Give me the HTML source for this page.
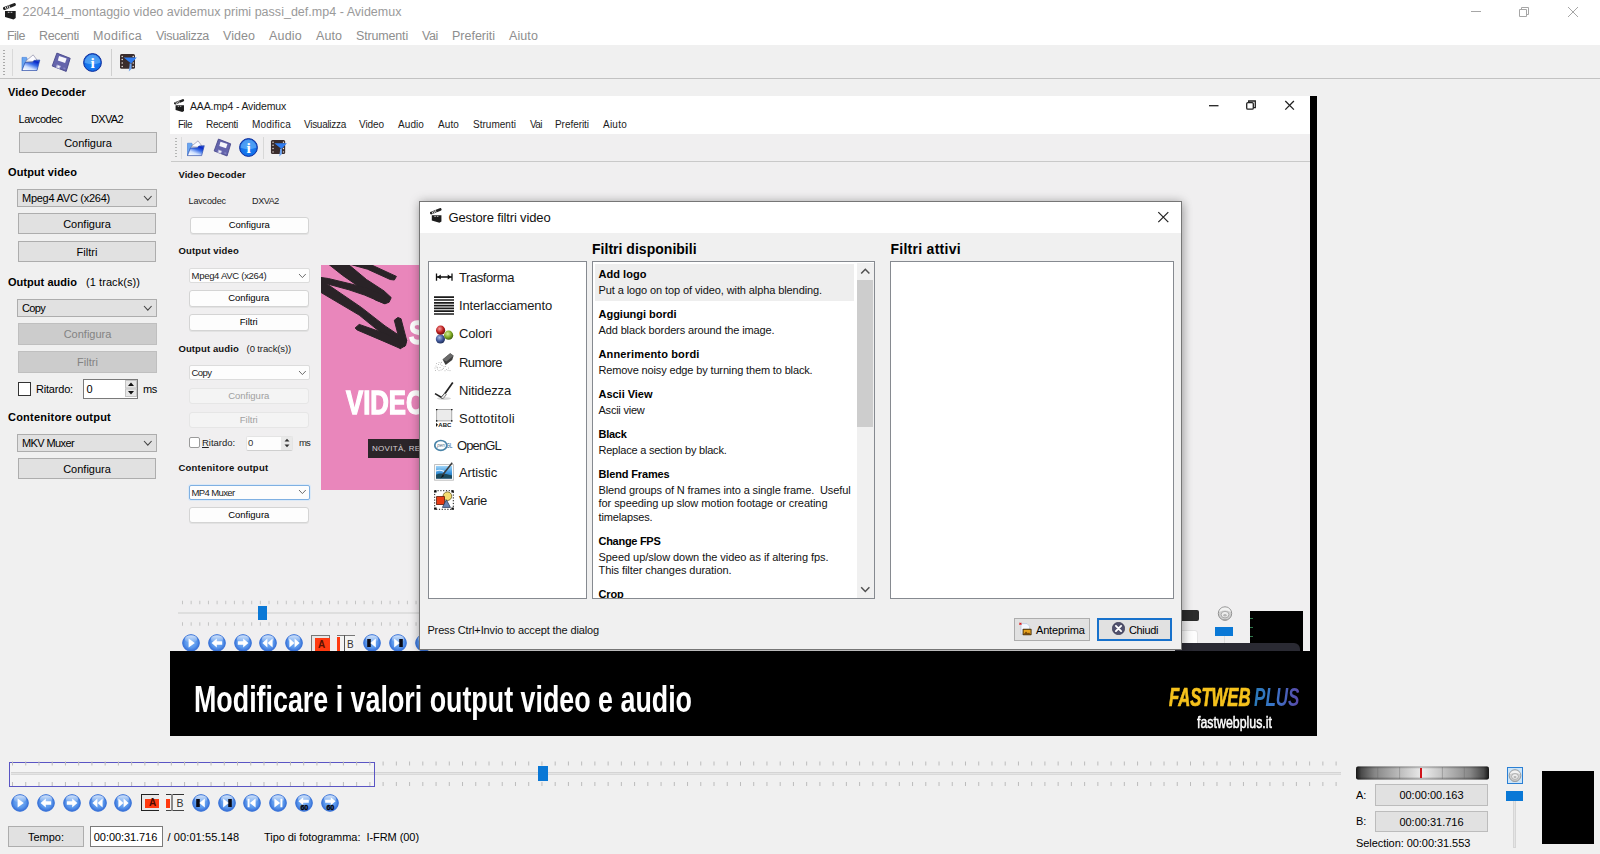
<!DOCTYPE html>
<html><head><meta charset="utf-8"><title>Avidemux</title>
<style>
*{box-sizing:border-box;margin:0;padding:0}
html,body{width:1600px;height:854px;overflow:hidden;background:#f0f0f0;font-family:"Liberation Sans",sans-serif;font-size:11px;color:#000}
.a{position:absolute}
.t{position:absolute;white-space:pre;line-height:1;transform-origin:0 50%}
.b{font-weight:bold}
.btn{position:absolute;background:#e1e1e1;border:1px solid #adadad;text-align:center;font-size:11px}
.btn span{position:absolute;left:0;right:0;top:50%;transform:translateY(-50%);line-height:1}
.btn.dis{background:#cccccc;border-color:#bfbfbf;color:#838383}
.combo{position:absolute;background:#e1e1e1;border:1px solid #adadad}
.ibtn{position:absolute;background:#fdfdfd;border:1px solid #d4d4d4;border-radius:3px;text-align:center;font-size:9.5px;box-shadow:0 1px 0 #e2e2e2}
.ibtn span{position:absolute;left:0;right:0;top:50%;transform:translateY(-50%);line-height:1}
.ibtn.dis{background:#f4f4f4;border-color:#e6e6e6;color:#a0a0a0;box-shadow:none}
.icombo{position:absolute;background:#fdfdfd;border:1px solid #dcdcdc;border-radius:2px}
.lst{position:absolute;background:#fff;border:1px solid #868a90}
</style></head><body>
<svg width="0" height="0" style="position:absolute">
<defs>
<radialGradient id="gb" cx="0.5" cy="0.45" r="0.6"><stop offset="0" stop-color="#86b6f6"/><stop offset="0.55" stop-color="#5a98ec"/><stop offset="0.85" stop-color="#3a72d8"/><stop offset="1" stop-color="#9abcf0"/></radialGradient>
<linearGradient id="gsh" x1="0" y1="0" x2="0" y2="1"><stop offset="0" stop-color="#fff" stop-opacity=".75"/><stop offset="1" stop-color="#fff" stop-opacity="0"/></linearGradient>
<linearGradient id="gjog" x1="0" x2="1"><stop offset="0" stop-color="#161616"/><stop offset="0.04" stop-color="#4a4a4a"/><stop offset="0.14" stop-color="#868686"/><stop offset="0.33" stop-color="#bdbdbd"/><stop offset="0.5" stop-color="#ececec"/><stop offset="0.67" stop-color="#bdbdbd"/><stop offset="0.86" stop-color="#868686"/><stop offset="0.96" stop-color="#4a4a4a"/><stop offset="1" stop-color="#161616"/></linearGradient><linearGradient id="gjogv" x1="0" y1="0" x2="0" y2="1"><stop offset="0" stop-color="#000" stop-opacity=".35"/><stop offset="0.18" stop-color="#000" stop-opacity="0"/><stop offset="0.8" stop-color="#000" stop-opacity="0"/><stop offset="1" stop-color="#000" stop-opacity=".4"/></linearGradient>
<linearGradient id="gfold" x1="0.15" y1="1" x2="0.85" y2="0"><stop offset="0" stop-color="#ffffff"/><stop offset="0.3" stop-color="#cfe0ff"/><stop offset="0.6" stop-color="#3a6ee8"/><stop offset="0.85" stop-color="#0a28c8"/><stop offset="1" stop-color="#2a50d8"/></linearGradient>
<radialGradient id="ginfo" cx="0.5" cy="0.55" r="0.6"><stop offset="0" stop-color="#1a86f8"/><stop offset="0.7" stop-color="#126ee8"/><stop offset="1" stop-color="#0a44c0"/></radialGradient>
<radialGradient id="gred" cx="0.4" cy="0.35" r="0.7"><stop offset="0" stop-color="#f4a0a0"/><stop offset="0.55" stop-color="#c02020"/><stop offset="1" stop-color="#5a0a0a"/></radialGradient>
<radialGradient id="ggrn" cx="0.4" cy="0.35" r="0.7"><stop offset="0" stop-color="#d4ee9a"/><stop offset="0.55" stop-color="#80aa24"/><stop offset="1" stop-color="#34540c"/></radialGradient>
<radialGradient id="gblu" cx="0.4" cy="0.35" r="0.7"><stop offset="0" stop-color="#a8bce4"/><stop offset="0.55" stop-color="#40589a"/><stop offset="1" stop-color="#18264c"/></radialGradient>
<linearGradient id="gart" x1="0" y1="0" x2="0" y2="1"><stop offset="0" stop-color="#9fd4f8"/><stop offset="0.55" stop-color="#3a94dc"/><stop offset="1" stop-color="#1c5890"/></linearGradient>

<symbol id="clap" viewBox="0 0 14 17"><path d="M2 8h10.700v7.100l-2.200 1.400L2 13.900z" fill="#1c1c1c"/><path d="M1.500 5.500L11.300 1.600" stroke="#222" stroke-width="3.100" stroke-linecap="round"/><path d="M2.300 3.900l1 2.500M4.100 3.200l1 2.500M5.900 2.500l1 2.500" stroke="#fff" stroke-width=".9"/><path d="M4.800 9.300h1.700M7.600 9.300h1.700" stroke="#e4e4e4" stroke-width=".9"/></symbol>

<symbol id="cb" viewBox="0 0 18 18"><circle cx="9" cy="9" r="8.5" fill="url(#gb)"/><circle cx="9" cy="9" r="8.3" fill="none" stroke="#3a74d8" stroke-width="0.9"/><ellipse cx="9" cy="5" rx="6.2" ry="3.8" fill="url(#gsh)"/></symbol>
<symbol id="b_play" viewBox="0 0 18 18"><use href="#cb"/><path d="M6.6 4.4l6.2 4.6-6.2 4.6z" fill="#fff"/></symbol>
<symbol id="b_back" viewBox="0 0 18 18"><use href="#cb"/><path d="M3.6 9l5.2-4.6v2.9h5.4v3.4H8.8v2.9z" fill="#fff"/></symbol>
<symbol id="b_fwd" viewBox="0 0 18 18"><use href="#cb"/><path d="M14.4 9L9.2 4.4v2.9H3.8v3.4h5.4v2.9z" fill="#fff"/></symbol>
<symbol id="b_rew" viewBox="0 0 18 18"><use href="#cb"/><path d="M3.4 9l5-4.4v8.8zM8.6 9l5-4.4v8.8z" fill="#fff"/></symbol>
<symbol id="b_ff" viewBox="0 0 18 18"><use href="#cb"/><path d="M14.6 9l-5-4.4v8.8zM9.4 9l-5-4.4v8.8z" fill="#fff"/></symbol>
<symbol id="b_pk" viewBox="0 0 18 18"><use href="#cb"/><path d="M4.2 5h3.6v8H4.2z" fill="#0a0a14"/><path d="M7.4 9l5.4-4.4v8.8z" fill="#fff"/></symbol>
<symbol id="b_nk" viewBox="0 0 18 18"><use href="#cb"/><path d="M10.2 5h3.6v8h-3.6z" fill="#0a0a14"/><path d="M10.6 9L5.2 4.6v8.8z" fill="#fff"/></symbol>
<symbol id="b_pb" viewBox="0 0 18 18"><use href="#cb"/><path d="M4.6 4.8h2v8.4h-2zM6.8 9l5.8-4.4v8.8z" fill="#fff"/></symbol>
<symbol id="b_nb" viewBox="0 0 18 18"><use href="#cb"/><path d="M11.4 4.8h2v8.4h-2zM11.2 9L5.4 4.6v8.8z" fill="#fff"/></symbol>
<symbol id="b_p60" viewBox="0 0 18 18"><use href="#cb"/><path d="M3.400 7.200l4.800-4v2.500h5.600v3H8.200v2.500z" fill="#fff"/><text x="9.300" y="16.300" font-family="'Liberation Sans',sans-serif" font-weight="bold" font-size="7" text-anchor="middle" fill="#05050c" stroke="#05050c" stroke-width=".4">60</text></symbol>
<symbol id="b_n60" viewBox="0 0 18 18"><use href="#cb"/><path d="M14.600 7.200l-4.800-4v2.500H4.200v3h5.600v2.500z" fill="#fff"/><text x="9.300" y="16.300" font-family="'Liberation Sans',sans-serif" font-weight="bold" font-size="7" text-anchor="middle" fill="#05050c" stroke="#05050c" stroke-width=".4">60</text></symbol>

<symbol id="folder" viewBox="0 0 20 18"><path d="M1 3.400h4.500l.7 1.500L4 9l-3 7.500z" fill="#6aa6f0" stroke="#3a78d8" stroke-width=".6"/><path d="M4.700 7.100L12.200.9 16 6l-4.100 1.500z" fill="#fbfbff" stroke="#7c7c9c" stroke-width=".6"/><path d="M4 8.600l7.500-.4L13 6.400l5.800-.4L16 16.500H1z" fill="url(#gfold)" stroke="#2a4aa8" stroke-width=".7" stroke-linejoin="round"/></symbol>
<symbol id="floppy" viewBox="0 0 20 21"><path d="M5.900 1.100L19.200 6.300 15.200 19.400 1.200 14z" fill="#6464ac" stroke="#48488a" stroke-width=".9" stroke-linejoin="round"/><path d="M8.100 4.100l7.500 2.400-1.500 4.500-7.300-2.400z" fill="#f6f6fc"/><path d="M5.900 12.500l4.100 1.500-1.500 3-3.800-1.500z" fill="#b4b4dc"/><path d="M7 13.600l1.800.7-.8 1.700-1.800-.7z" fill="#f4f4fa"/><path d="M12.600 15.200l2 .8-.5 1.600-2-.8z" fill="#8484c0"/></symbol>
<symbol id="info" viewBox="0 0 19 19"><circle cx="9.500" cy="9.500" r="8.900" fill="url(#ginfo)" stroke="#0c2c9c" stroke-width="1"/><path d="M1.600 9.500a7.900 7.900 0 0 1 15.800 0c-4 2-11.800 2-15.800 0z" fill="#8fd0ff" opacity=".45"/><text x="9.700" y="15" font-family="'Liberation Serif',serif" font-weight="bold" font-size="15.500" text-anchor="middle" fill="#fff">i</text></symbol>
<symbol id="filt" viewBox="0 0 19 19"><rect x="1" y="1" width="15" height="14.800" rx="1.600" fill="#3a2c2c"/><path d="M3.200 3.400h.01M3.200 6.600h.01M3.200 10h.01M3.200 13.600h.01M14.200 3.400h.01M14.200 10h.01M14.200 13.600h.01" stroke="#f0e8e4" stroke-width="1.500" stroke-linecap="round"/><path d="M4.600 4.600h13.200l-5.600 6z" fill="#2f7cf0"/><path d="M10.600 10.400h2v5.400l-2.800 2.800.8-6.400z" fill="#6ea4f0"/></symbol>

<symbol id="i_tr" viewBox="0 0 20 20"><path d="M2.500 6.400v7.400M18 6.400v7.400M3 10h14.500" stroke="#111" stroke-width="1.300" fill="none"/><path d="M3.200 10l3.600-2.600v5.200zM17.300 10l-3.600-2.600v5.200z" fill="#111"/></symbol>
<symbol id="i_il" viewBox="0 0 20 20"><path d="M0 1.200h20M0 4h20M0 6.800h20M0 9.600h20M0 12.400h20M0 15.200h20M0 18h20" stroke="#1a1a1a" stroke-width="1.700"/></symbol>
<symbol id="i_co" viewBox="0 0 20 20"><circle cx="6.400" cy="15" r="4.600" fill="url(#gblu)"/><circle cx="14.600" cy="11.200" r="4.600" fill="url(#ggrn)"/><circle cx="6.600" cy="6.200" r="4.600" fill="url(#gred)"/></symbol>
<symbol id="i_ru" viewBox="0 0 20 20"><path d="M8.600 7.400l7.600-6.200 3.400 2.600-1.400 4.200-6.600 5z" fill="#3c3c3c"/><path d="M8.600 7.400l7.600-6.200 3.400 2.600-7.200 5.800z" fill="#6a6a6a"/><path d="M2 14h.01M4.500 12.500h.01M6 15.500h.01M3.500 17h.01M8 13.500h.01M9.500 16.500h.01M7 18h.01M1.500 18.500h.01M11.500 14.500h.01M12.500 17.500h.01M5 10.500h.01M10 14.800h.01M14.500 16h.01M2.500 11.500h.01M5 18.600h.01M11 18.800h.01M14 18.200h.01M6.600 12h.01M3.200 15.400h.01M8.400 17.200h.01M16 18.600h.01M1 16h.01M7.400 10.400h.01" stroke="#b4b4b4" stroke-width="1.100" stroke-linecap="round"/></symbol>
<symbol id="i_ni" viewBox="0 0 20 20"><ellipse cx="10" cy="17.600" rx="7" ry="1.400" fill="#d8d8d8"/><path d="M18.800 1.600L9.600 14.400" stroke="#222" stroke-width="1.700"/><path d="M1 12.600l6.600 3.800 3-3" stroke="#222" stroke-width="1.600" fill="none"/><path d="M7 16.600l3.800-4.400 1.600 1.300-3.400 4.300z" fill="#eee" stroke="#555" stroke-width=".7"/></symbol>
<symbol id="i_so" viewBox="0 0 20 20"><rect x="2.700" y=".600" width="15.100" height="11.300" fill="#ebebeb" stroke="#8c8c8c" stroke-width=".7"/><path d="M2.700.6h.01M17.800.6h.01M2.700 11.900h.01M17.800 11.900h.01" stroke="#111" stroke-width="1.600" stroke-linecap="round"/><path d="M2 13.700l2 2.100-2 2.100z" fill="#111"/><text x="4.300" y="18" font-family="'Liberation Sans',sans-serif" font-weight="bold" font-size="6" fill="#111" textLength="13" lengthAdjust="spacingAndGlyphs">ABC</text></symbol>
<symbol id="i_gl" viewBox="0 0 20 20"><ellipse cx="6.800" cy="9.400" rx="6" ry="4.900" fill="#fff" stroke="#4a84a8" stroke-width="1.700"/><text x="3.200" y="11.400" font-family="'Liberation Sans',sans-serif" font-style="italic" font-size="5.500" fill="#4a6a80" textLength="7.600" lengthAdjust="spacingAndGlyphs">pen</text><text x="12.400" y="12.200" font-family="'Liberation Sans',sans-serif" font-weight="bold" font-size="6.500" fill="#5a8ab0" textLength="6" lengthAdjust="spacingAndGlyphs">GL</text></symbol>
<symbol id="i_ar" viewBox="0 0 20 20"><rect x=".6" y="2.600" width="18.800" height="15.600" fill="#fbfbfb" stroke="#b4b4b4" stroke-width=".8"/><rect x="2" y="4" width="16" height="12.600" fill="url(#gart)"/><path d="M2 12.800c4-2.200 8-1.600 16 .6v3.200H2z" fill="#1c4a5c"/><path d="M2 9c3-1.400 5-1 8 .4" stroke="#e8f4ff" stroke-width="1.200" fill="none"/><path d="M18.200.8L8.600 13" stroke="#3c3c3c" stroke-width="1.500"/><path d="M9 12.400l-2.800 4.200 3.800-2.600z" fill="#111"/></symbol>
<symbol id="i_va" viewBox="0 0 20 20"><rect x=".7" y=".7" width="18.600" height="18.600" fill="none" stroke="#111" stroke-width="1" stroke-dasharray="1.200 1.600"/><path d="M.2.200h2.400v2.400H.2zM17.400.2h2.400v2.400h-2.400zM.2 17.400h2.400v2.400H.2zM17.400 17.400h2.400v2.400h-2.400z" fill="#111"/><circle cx="13.400" cy="6.200" r="4.300" fill="#f4dc70" stroke="#6a5a20" stroke-width=".8"/><rect x="2.600" y="6.600" width="7.800" height="8" fill="#e83c14" stroke="#5a1808" stroke-width=".8"/><path d="M8.400 17.400l4-7.600 4 7.600z" fill="#6a84b4" stroke="#2c3c5c" stroke-width=".8"/></symbol>
<symbol id="i_prev" viewBox="0 0 15 15"><path d="M3 1.600h6l2.600 2.600v8H3z" fill="#f4f8ff" stroke="#b4c4dc" stroke-width=".7"/><path d="M1.400.8l2 1.800M3.400.8l-2 1.800" stroke="#e01818" stroke-width="1.100"/><rect x="4.600" y="6.800" width="9" height="6.400" rx=".8" fill="#4a3410"/><rect x="5.600" y="7.800" width="7" height="4.400" fill="#e8a420"/><path d="M5.600 12.200l2.400-2.600 1.800 1.600 1.200-.8 1.600 1.800z" fill="#7a4a08"/></symbol>
<symbol id="i_close" viewBox="0 0 13 13"><circle cx="6.500" cy="6.500" r="6.200" fill="#50506c" stroke="#34344c" stroke-width=".6"/><path d="M3.900 3.900l5.200 5.200M9.100 3.900L3.900 9.100" stroke="#fff" stroke-width="1.900" stroke-linecap="round"/></symbol>
</defs></svg>

<div class="a" style="left:0px;top:0px;width:1600px;height:45px;background:#fff"></div>
<svg class="a" style="left:3px;top:3.2px;" width="14" height="17"><use href="#clap" width="14" height="17"/></svg>
<div class="t" style="letter-spacing:0.020px;left:22.5px;top:6.4px;font-size:12.5px;height:12.5px;color:#9a9a9a;">220414_montaggio video avidemux primi passi_def.mp4 - Avidemux</div>
<svg class="a" style="left:1460px;top:0" width="140" height="24" viewBox="0 0 140 24" fill="none" stroke="#a6a6a6" stroke-width="1"><path d="M11 11.5h10"/><path d="M59.5 9.5h7v7h-7z"/><path d="M61.5 9.5v-2h7v7h-2"/><path d="M108 7l10 10M118 7l-10 10"/></svg>
<div class="t" style="letter-spacing:-0.539px;left:7px;top:29.6px;font-size:12.5px;height:12.5px;color:#8e8e8e;">File</div>
<div class="t" style="letter-spacing:-0.342px;left:39px;top:29.6px;font-size:12.5px;height:12.5px;color:#8e8e8e;">Recenti</div>
<div class="t" style="letter-spacing:0.307px;left:93px;top:29.6px;font-size:12.5px;height:12.5px;color:#8e8e8e;">Modifica</div>
<div class="t" style="letter-spacing:-0.306px;left:156px;top:29.6px;font-size:12.5px;height:12.5px;color:#8e8e8e;">Visualizza</div>
<div class="t" style="letter-spacing:0.050px;left:223px;top:29.6px;font-size:12.5px;height:12.5px;color:#8e8e8e;">Video</div>
<div class="t" style="letter-spacing:0.203px;left:269px;top:29.6px;font-size:12.5px;height:12.5px;color:#8e8e8e;">Audio</div>
<div class="t" style="letter-spacing:0.070px;left:316px;top:29.6px;font-size:12.5px;height:12.5px;color:#8e8e8e;">Auto</div>
<div class="t" style="letter-spacing:-0.167px;left:356px;top:29.6px;font-size:12.5px;height:12.5px;color:#8e8e8e;">Strumenti</div>
<div class="t" style="letter-spacing:-0.380px;left:422px;top:29.6px;font-size:12.5px;height:12.5px;color:#8e8e8e;">Vai</div>
<div class="t" style="letter-spacing:-0.009px;left:452px;top:29.6px;font-size:12.5px;height:12.5px;color:#8e8e8e;">Preferiti</div>
<div class="t" style="letter-spacing:0.100px;left:509px;top:29.6px;font-size:12.5px;height:12.5px;color:#8e8e8e;">Aiuto</div>
<div class="a" style="left:0px;top:78px;width:1600px;height:1px;background:#c2c2c2"></div>
<div class="a" style="left:3px;top:49px;width:2px;height:26px;background:repeating-linear-gradient(#f0f0f0 0 1px,#a9a9a9 1px 2px,#f0f0f0 2px 3px)"></div>
<div class="a" style="left:12px;top:49px;width:1px;height:27px;background:#d9d9d9"></div>
<div class="a" style="left:111px;top:49px;width:1px;height:27px;background:#d0d0d0"></div>
<svg class="a" style="left:21px;top:54px;" width="20" height="18"><use href="#folder" width="20" height="18"/></svg>
<svg class="a" style="left:51px;top:52px;" width="20" height="21"><use href="#floppy" width="20" height="21"/></svg>
<svg class="a" style="left:83px;top:53px;" width="19" height="19"><use href="#info" width="19" height="19"/></svg>
<svg class="a" style="left:119px;top:53px;" width="19" height="19"><use href="#filt" width="19" height="19"/></svg>
<div class="t" style="letter-spacing:0.090px;left:8px;top:87.0px;font-size:11px;height:11px;font-weight:bold;">Video Decoder</div>
<div class="t" style="letter-spacing:-0.449px;left:18.5px;top:113.5px;font-size:11px;height:11px;">Lavcodec</div>
<div class="t" style="letter-spacing:-0.653px;left:91px;top:113.5px;font-size:11px;height:11px;">DXVA2</div>
<div class="btn" style="left:19px;top:132px;width:138px;height:21px;"><span>Configura</span></div>
<div class="t" style="letter-spacing:0.098px;left:8px;top:166.5px;font-size:11px;height:11px;font-weight:bold;">Output video</div>
<div class="combo" style="left:17px;top:189px;width:140px;height:18px;"></div>
<div class="t" style="letter-spacing:-0.258px;left:22px;top:193.0px;font-size:11px;height:11px;">Mpeg4 AVC (x264)</div>
<svg class="a" style="left:143.2px;top:195.2px" width="9.6" height="6.6" viewBox="-1 -1 9.6 6.6"><path d="M0 0L3.8 4.1L7.6 0" fill="none" stroke="#444" stroke-width="1.1"/></svg>
<div class="btn" style="left:18px;top:213px;width:138px;height:21px;"><span>Configura</span></div>
<div class="btn" style="left:18px;top:241px;width:138px;height:21px;"><span>Filtri</span></div>
<div class="t" style="letter-spacing:0.047px;left:8px;top:276.5px;font-size:11px;height:11px;font-weight:bold;">Output audio</div>
<div class="t" style="letter-spacing:0.069px;left:86px;top:276.5px;font-size:11px;height:11px;">(1 track(s))</div>
<div class="combo" style="left:17px;top:299px;width:140px;height:18px;"></div>
<div class="t" style="letter-spacing:-0.672px;left:22px;top:303.0px;font-size:11px;height:11px;">Copy</div>
<svg class="a" style="left:143.2px;top:305.2px" width="9.6" height="6.6" viewBox="-1 -1 9.6 6.6"><path d="M0 0L3.8 4.1L7.6 0" fill="none" stroke="#444" stroke-width="1.1"/></svg>
<div class="btn dis" style="left:18px;top:323px;width:139px;height:22px;"><span>Configura</span></div>
<div class="btn dis" style="left:18px;top:351px;width:139px;height:22px;"><span>Filtri</span></div>
<div class="a" style="left:17.5px;top:382px;width:13.5px;height:13.5px;background:#fff;border:1px solid #333"></div>
<div class="t" style="letter-spacing:-0.191px;left:36px;top:383.5px;font-size:11px;height:11px;">Ritardo:</div>
<div class="a" style="left:83px;top:379px;width:55px;height:19.5px;background:#fff;border:1px solid #7a7a7a"></div>
<div class="t" style="left:86.5px;top:383.5px;font-size:11px;height:11px;">0</div>
<svg class="a" style="left:125px;top:380px" width="12" height="17" viewBox="0 0 12 17"><rect width="12" height="17" fill="#f0f0f0"/><rect x="0.5" y="0.5" width="11" height="7.5" fill="#e6e6e6" stroke="#c4c4c4"/><rect x="0.5" y="9" width="11" height="7.5" fill="#e6e6e6" stroke="#c4c4c4"/><path d="M3 6l3-3.4 3 3.4zM3 11l3 3.4 3-3.4z" fill="#111"/></svg>
<div class="t" style="letter-spacing:-0.336px;left:143px;top:383.5px;font-size:11px;height:11px;">ms</div>
<div class="t" style="letter-spacing:0.223px;left:8px;top:411.5px;font-size:11px;height:11px;font-weight:bold;">Contenitore output</div>
<div class="combo" style="left:17px;top:434px;width:140px;height:18px;"></div>
<div class="t" style="letter-spacing:-0.608px;left:22px;top:438.0px;font-size:11px;height:11px;">MKV Muxer</div>
<svg class="a" style="left:143.2px;top:440.2px" width="9.6" height="6.6" viewBox="-1 -1 9.6 6.6"><path d="M0 0L3.8 4.1L7.6 0" fill="none" stroke="#444" stroke-width="1.1"/></svg>
<div class="btn" style="left:18px;top:458px;width:138px;height:21px;"><span>Configura</span></div>
<div class="a" id="vid" style="left:170px;top:96px;width:1147px;height:640px;overflow:hidden">
<div class="a" style="left:-170px;top:-96px;width:1600px;height:854px">
<div class="a" style="left:170.4px;top:96.3px;width:1139.6px;height:555.7px;background:#f0eff0"></div>
<div class="a" style="left:170.4px;top:96.3px;width:1139.6px;height:37.7px;background:#fff"></div>
<svg class="a" style="left:173.5px;top:99px;" width="11" height="13.4"><use href="#clap" width="11" height="13.4"/></svg>
<div class="t" style="letter-spacing:-0.168px;left:190px;top:101.2px;font-size:10.5px;height:10.5px;color:#1a1a1a;">AAA.mp4 - Avidemux</div>
<svg class="a" style="left:1200px;top:97px" width="110" height="20" viewBox="0 0 110 20" fill="none" stroke="#222" stroke-width="1.3"><path d="M9 8.7h9.5"/><rect x="46.7" y="5.6" width="6.6" height="6.6" rx="1.2"/><path d="M48.7 5.6v-1.6h6.6v6.6h-2"/><path d="M85.3 4l8.6 8.6M93.9 4l-8.6 8.6"/></svg>
<div class="t" style="letter-spacing:-0.531px;left:178px;top:120.3px;font-size:10px;height:10px;color:#1c1c1c;">File</div>
<div class="t" style="letter-spacing:-0.272px;left:206px;top:120.3px;font-size:10px;height:10px;color:#1c1c1c;">Recenti</div>
<div class="t" style="letter-spacing:0.219px;left:252px;top:120.3px;font-size:10px;height:10px;color:#1c1c1c;">Modifica</div>
<div class="t" style="letter-spacing:-0.284px;left:304px;top:120.3px;font-size:10px;height:10px;color:#1c1c1c;">Visualizza</div>
<div class="t" style="letter-spacing:-0.081px;left:359px;top:120.3px;font-size:10px;height:10px;color:#1c1c1c;">Video</div>
<div class="t" style="letter-spacing:0.084px;left:398px;top:120.3px;font-size:10px;height:10px;color:#1c1c1c;">Audio</div>
<div class="t" style="letter-spacing:0.105px;left:438px;top:120.3px;font-size:10px;height:10px;color:#1c1c1c;">Auto</div>
<div class="t" style="letter-spacing:0.023px;left:473px;top:120.3px;font-size:10px;height:10px;color:#1c1c1c;">Strumenti</div>
<div class="t" style="letter-spacing:-0.573px;left:530px;top:120.3px;font-size:10px;height:10px;color:#1c1c1c;">Vai</div>
<div class="t" style="letter-spacing:-0.050px;left:555px;top:120.3px;font-size:10px;height:10px;color:#1c1c1c;">Preferiti</div>
<div class="t" style="letter-spacing:0.241px;left:603px;top:120.3px;font-size:10px;height:10px;color:#1c1c1c;">Aiuto</div>
<div class="a" style="left:171px;top:161px;width:1139px;height:1px;background:#c9c9c9"></div>
<div class="a" style="left:175px;top:137px;width:2px;height:21px;background:repeating-linear-gradient(#f0f0f0 0 1px,#b5b5b5 1px 2px,#f0f0f0 2px 3px)"></div>
<div class="a" style="left:181px;top:137px;width:1px;height:22px;background:#dcdcdc"></div>
<div class="a" style="left:263px;top:137px;width:1px;height:22px;background:#d8d8d8"></div>
<svg class="a" style="left:186px;top:139.5px;" width="20" height="17"><use href="#folder" width="20" height="17"/></svg>
<svg class="a" style="left:213px;top:138px;" width="18.5" height="19.5"><use href="#floppy" width="18.5" height="19.5"/></svg>
<svg class="a" style="left:239px;top:138px;" width="19" height="19"><use href="#info" width="19" height="19"/></svg>
<svg class="a" style="left:270px;top:138.5px;" width="18" height="18"><use href="#filt" width="18" height="18"/></svg>
<div class="t" style="letter-spacing:0.088px;left:178.4px;top:169.7px;font-size:9.5px;height:9.5px;font-weight:bold;color:#111;">Video Decoder</div>
<div class="t" style="letter-spacing:-0.129px;left:188.5px;top:196.5px;font-size:9px;height:9px;color:#222;">Lavcodec</div>
<div class="t" style="letter-spacing:-0.372px;left:252px;top:196.5px;font-size:9px;height:9px;color:#222;">DXVA2</div>
<div class="ibtn" style="left:189.5px;top:217px;width:119.5px;height:16.5px;"><span>Configura</span></div>
<div class="t" style="letter-spacing:0.160px;left:178.4px;top:246.2px;font-size:9.5px;height:9.5px;font-weight:bold;color:#111;">Output video</div>
<div class="icombo" style="left:188.5px;top:268px;width:121.0px;height:15px;"></div>
<div class="t" style="letter-spacing:-0.285px;left:191.5px;top:270.8px;font-size:9.5px;height:9.5px;color:#222;">Mpeg4 AVC (x264)</div>
<svg class="a" style="left:297.6px;top:272.7px" width="8.8" height="6.1" viewBox="-1 -1 8.8 6.1"><path d="M0 0L3.4 3.6L6.8 0" fill="none" stroke="#6c6c6c" stroke-width="1"/></svg>
<div class="ibtn" style="left:189px;top:290px;width:119.5px;height:16.5px;"><span>Configura</span></div>
<div class="ibtn" style="left:189px;top:314px;width:119.5px;height:16.5px;"><span>Filtri</span></div>
<div class="t" style="letter-spacing:0.116px;left:178.4px;top:343.9px;font-size:9.5px;height:9.5px;font-weight:bold;color:#111;">Output audio</div>
<div class="t" style="letter-spacing:-0.118px;left:246.6px;top:343.9px;font-size:9.5px;height:9.5px;color:#222;">(0 track(s))</div>
<div class="icombo" style="left:188.5px;top:365px;width:121.0px;height:15px;"></div>
<div class="t" style="letter-spacing:-0.547px;left:191.5px;top:368.2px;font-size:9.5px;height:9.5px;color:#222;">Copy</div>
<svg class="a" style="left:297.6px;top:369.9px" width="8.8" height="6.1" viewBox="-1 -1 8.8 6.1"><path d="M0 0L3.4 3.6L6.8 0" fill="none" stroke="#6c6c6c" stroke-width="1"/></svg>
<div class="ibtn dis" style="left:189px;top:388px;width:119.5px;height:16px;"><span>Configura</span></div>
<div class="ibtn dis" style="left:189px;top:412px;width:119.5px;height:16px;"><span>Filtri</span></div>
<div class="a" style="left:188.5px;top:437px;width:11.0px;height:11px;background:#fff;border:1px solid #9a9a9a;border-radius:2px"></div>
<div class="t" style="letter-spacing:-0.035px;left:202px;top:438.2px;font-size:9.5px;height:9.5px;color:#222;"><u>R</u>itardo:</div>
<div class="a" style="left:246px;top:435.5px;width:47px;height:15.5px;background:#fdfdfd;border:1px solid #e4e4e4;border-bottom-color:#cfcfcf;border-radius:2px"></div>
<div class="a" style="left:281px;top:436.5px;width:11px;height:13.5px;background:#e9e9e9"></div>
<div class="t" style="left:248px;top:438.4px;font-size:9.5px;height:9.5px;color:#333;">0</div>
<svg class="a" style="left:282px;top:436px" width="10" height="14" viewBox="0 0 10 14"><path d="M2.5 5.5l2.5-2.8 2.5 2.8zM2.5 8.5l2.5 2.8 2.5-2.8z" fill="#333"/></svg>
<div class="t" style="letter-spacing:-0.836px;left:299px;top:438.4px;font-size:9.5px;height:9.5px;color:#222;">ms</div>
<div class="t" style="letter-spacing:0.251px;left:178.4px;top:462.8px;font-size:9.5px;height:9.5px;font-weight:bold;color:#111;">Contenitore output</div>
<div class="a" style="left:188.5px;top:484.5px;width:121.0px;height:15.0px;background:#fdfdfd;border:1px solid #7fb0e2;border-radius:2px;box-shadow:0 0 0 1px #dbe9f7"></div>
<div class="t" style="letter-spacing:-0.620px;left:191.5px;top:487.6px;font-size:9.5px;height:9.5px;color:#222;">MP4 Muxer</div>
<svg class="a" style="left:297.6px;top:489.2px" width="8.8" height="6.1" viewBox="-1 -1 8.8 6.1"><path d="M0 0L3.4 3.6L6.8 0" fill="none" stroke="#6c6c6c" stroke-width="1"/></svg>
<div class="ibtn" style="left:189px;top:507px;width:119.5px;height:16px;"><span>Configura</span></div>
<div class="a" style="left:321px;top:265px;width:110px;height:225px;background:#e986bb;overflow:hidden">
<svg class="a" style="left:0;top:0" width="110" height="225" viewBox="321 265 110 225" fill="#2a2327" stroke="#2a2327" stroke-width="1" stroke-linejoin="round"><polygon points="348.9,264 369.5,264 396.4,276.4 394.3,280 390.2,279.5 367.5,269.2"/><polygon points="328.3,264 347.9,264 366.5,279.5 384,290.9 391.2,297.6 389.1,302.2 385,303.8 375.7,300.1 363.4,289.8 342.7,275.4"/><polygon points="320,277.3 328.3,278.5 352,284.2 367.5,288.3 385,296 385,303.8 364.4,295 348.9,289.8 328.3,284.2 320,282.6"/><polygon points="320,282.1 327.3,284.2 361.3,307.4 385,325.9 406.7,340.4 405.6,345.5 400.5,348.6 384,335.2 359.2,315.1 320,291.9"/><polygon points="355.1,328 359.2,324.4 384,333.1 400.5,340.4 400.5,348.6 384,341.4 357.2,330"/><polygon points="394.3,320.2 397.9,317.5 401,318.7 406.7,340.4 404.6,346.5 399.4,344.5 397.9,334.2"/></svg>
<div class="t b" style="transform:scaleX(0.7789);left:24.6px;top:120.5px;font-size:33px;height:33px;line-height:33px;color:#fff;-webkit-text-stroke:1.3px #fff">VIDEO</div>
<div class="t b" style="transform:scaleX(0.7722);left:87.7px;top:51px;font-size:33px;height:33px;line-height:33px;color:#fff;-webkit-text-stroke:1.3px #fff">S</div>
<div class="a" style="left:46.5px;top:174px;width:80px;height:19px;background:#2b2529"></div>
<div class="t" style="left:51px;top:179.5px;font-size:8px;height:8px;color:#d8d0d4;letter-spacing:0.3px">NOVITÀ, RECENSIONI</div>
</div>
<div class="a" style="left:178px;top:612px;width:1003px;height:2px;background:#dedede"></div>
<svg class="a" style="left:171px;top:600px" width="1010" height="28"><path d="M11 2.500H1010M11 24H1010" stroke="#c4c4c4" stroke-width="3.500" stroke-dasharray="1 7.650" fill="none"/></svg>
<div class="a" style="left:258px;top:605.5px;width:8.5px;height:14.5px;background:#0a78d6"></div>
<svg class="a" style="left:181.7px;top:634px;" width="18" height="18"><use href="#b_play" width="18" height="18"/></svg>
<svg class="a" style="left:207.6px;top:634px;" width="18" height="18"><use href="#b_back" width="18" height="18"/></svg>
<svg class="a" style="left:233.5px;top:634px;" width="18" height="18"><use href="#b_fwd" width="18" height="18"/></svg>
<svg class="a" style="left:259.4px;top:634px;" width="18" height="18"><use href="#b_rew" width="18" height="18"/></svg>
<svg class="a" style="left:285.3px;top:634px;" width="18" height="18"><use href="#b_ff" width="18" height="18"/></svg>
<svg class="a" style="left:363px;top:634px;" width="18" height="18"><use href="#b_pk" width="18" height="18"/></svg>
<svg class="a" style="left:388.8px;top:634px;" width="18" height="18"><use href="#b_nk" width="18" height="18"/></svg>
<svg class="a" style="left:414.5px;top:634px;" width="18" height="18"><use href="#b_pb" width="18" height="18"/></svg>
<div class="a" style="left:311px;top:635px;width:19px;height:20px;background:#e6e6e6;border:1px solid #777"></div>
<div class="a" style="left:314.5px;top:638px;width:15.5px;height:17px;background:#ff3a10"></div>
<div class="t" style="left:318px;top:640.0px;font-size:10px;height:10px;font-weight:bold;color:#5a1000;">A</div>
<div class="a" style="left:337px;top:635px;width:18px;height:20px;background:#f4f4f4;border-top:1px solid #777"></div>
<div class="a" style="left:337px;top:637px;width:3px;height:18px;background:#ff3a10"></div>
<div class="a" style="left:343.5px;top:635px;width:1.5px;height:20px;background:#555"></div>
<div class="t" style="left:347px;top:640.0px;font-size:10px;height:10px;color:#333;">B</div>
<div class="a" style="left:1181px;top:609.5px;width:18px;height:11.5px;background:#2c2c2c;border-radius:0 2px 2px 0"></div>
<div class="a" style="left:1181px;top:630px;width:17px;height:18px;background:#fdfdfd;border:1px solid #e2e2e2;border-radius:0 3px 3px 0"></div>
<svg class="a" style="left:1217px;top:606px" width="16" height="16" viewBox="0 0 16 16"><circle cx="8" cy="7.500" r="6.700" fill="#cfcfcf" stroke="#8a8a8a" stroke-width=".9"/><path d="M2 6a6.300 6.300 0 0 1 12 0a9 5 0 0 0-12 0z" fill="#f2f2f2"/><ellipse cx="8" cy="8.600" rx="3.900" ry="3.300" fill="#ececec" stroke="#9c9c9c" stroke-width=".8"/><ellipse cx="8" cy="9.200" rx="1.700" ry="1.300" fill="#b4b4b4"/><path d="M4.600 13.600q3.400 2.600 6.800 0z" fill="#a0a0a0"/></svg>
<div class="a" style="left:1215px;top:627px;width:18px;height:9px;background:#0a78d6"></div>
<div class="a" style="left:1223.5px;top:636px;width:1.5px;height:15px;background:#dcdcdc"></div>
<div class="a" style="left:1250px;top:610.5px;width:53px;height:44.5px;background:#000"></div>
<div class="a" style="left:1250px;top:617px;width:3px;height:20px;background:repeating-linear-gradient(transparent 0 0.5px,#2f7a4c 0.5px 1.5px,transparent 1.5px 9px)"></div>
<div class="a" style="left:1175px;top:642.5px;width:125px;height:12.5px;background:#2a2a33;border-radius:0 6px 0 0"></div>
<div class="a" style="left:1310px;top:96.3px;width:8px;height:643.7px;background:#000"></div>
<div class="a" style="left:170.4px;top:651px;width:1147.6px;height:89px;background:#000"></div>
<div class="t b" style="transform:scaleX(0.7253);left:194px;top:681px;font-size:37px;height:37px;line-height:37px;color:#fff;">Modificare i valori output video e audio</div>
<div class="t b" style="transform:scaleX(0.6668);left:1169px;top:685px;font-size:25px;height:25px;line-height:25px;color:#f6c21c;font-style:italic;-webkit-text-stroke:0.7px #f6c21c;">FASTWEB</div>
<div class="t b" style="transform:scaleX(0.6823);left:1253.5px;top:685px;font-size:25px;height:25px;line-height:25px;font-style:italic;;background:linear-gradient(90deg,#2a7ab8,#3a74c8 45%,#5a48a8);-webkit-background-clip:text;background-clip:text;color:transparent">PLUS</div>
<div class="t" style="transform:scaleX(0.7282);left:1197px;top:714px;font-size:17px;height:17px;line-height:17px;color:#fff;-webkit-text-stroke:0.5px #fff;">fastwebplus.it</div>
<div class="a" style="left:419px;top:201px;width:763px;height:449px;background:#f0f0f0;border:1px solid #767676;box-shadow:0 0 10px 0 rgba(0,0,0,.22),2px 3px 9px rgba(0,0,0,.18)"></div>
<div class="a" style="left:420px;top:202px;width:761px;height:30.5px;background:#fff"></div>
<svg class="a" style="left:429.5px;top:208px;" width="12.6" height="15.3"><use href="#clap" width="12.6" height="15.3"/></svg>
<div class="t" style="letter-spacing:-0.138px;left:448.5px;top:211.0px;font-size:13px;height:13px;color:#111;">Gestore filtri video</div>
<svg class="a" style="left:1156px;top:210px" width="15" height="15" viewBox="0 0 15 15"><path d="M2.3 2.2l10 10M12.3 2.2l-10 10" stroke="#222" stroke-width="1.2" fill="none"/></svg>
<div class="t" style="letter-spacing:0.021px;left:592px;top:241.5px;font-size:14px;height:14px;font-weight:bold;">Filtri disponibili</div>
<div class="t" style="letter-spacing:0.284px;left:890.4px;top:241.5px;font-size:14px;height:14px;font-weight:bold;">Filtri attivi</div>
<div class="lst" style="left:427.5px;top:261px;width:159.0px;height:337.5px;"></div>
<div class="lst" style="left:591.5px;top:261px;width:283.5px;height:337.5px;"></div>
<div class="lst" style="left:890px;top:261px;width:283.5px;height:337.5px;"></div>
<div class="t" style="letter-spacing:-0.417px;left:459px;top:270.5px;font-size:13px;height:13px;color:#1a1a1a;">Trasforma</div>
<svg class="a" style="left:434px;top:267px;" width="20" height="20"><use href="#i_tr" width="20" height="20"/></svg>
<div class="t" style="letter-spacing:-0.149px;left:459px;top:299.1px;font-size:13px;height:13px;color:#1a1a1a;">Interlacciamento</div>
<svg class="a" style="left:434px;top:295.6px;" width="20" height="20"><use href="#i_il" width="20" height="20"/></svg>
<div class="t" style="letter-spacing:-0.161px;left:459px;top:327.3px;font-size:13px;height:13px;color:#1a1a1a;">Colori</div>
<svg class="a" style="left:434px;top:323.8px;" width="20" height="20"><use href="#i_co" width="20" height="20"/></svg>
<div class="t" style="letter-spacing:-0.542px;left:459px;top:355.5px;font-size:13px;height:13px;color:#1a1a1a;">Rumore</div>
<svg class="a" style="left:434px;top:352px;" width="20" height="20"><use href="#i_ru" width="20" height="20"/></svg>
<div class="t" style="letter-spacing:-0.163px;left:459px;top:384.1px;font-size:13px;height:13px;color:#1a1a1a;">Nitidezza</div>
<svg class="a" style="left:434px;top:380.6px;" width="20" height="20"><use href="#i_ni" width="20" height="20"/></svg>
<div class="t" style="letter-spacing:0.229px;left:459px;top:412.3px;font-size:13px;height:13px;color:#1a1a1a;">Sottotitoli</div>
<svg class="a" style="left:434px;top:408.8px;" width="20" height="20"><use href="#i_so" width="20" height="20"/></svg>
<div class="t" style="letter-spacing:-0.859px;left:457px;top:439.1px;font-size:13px;height:13px;color:#1a1a1a;">OpenGL</div>
<svg class="a" style="left:434px;top:435.6px;" width="20" height="20"><use href="#i_gl" width="20" height="20"/></svg>
<div class="t" style="letter-spacing:-0.125px;left:459px;top:465.5px;font-size:13px;height:13px;color:#1a1a1a;">Artistic</div>
<svg class="a" style="left:434px;top:462px;" width="20" height="20"><use href="#i_ar" width="20" height="20"/></svg>
<div class="t" style="letter-spacing:-0.278px;left:459px;top:493.5px;font-size:13px;height:13px;color:#1a1a1a;">Varie</div>
<svg class="a" style="left:434px;top:490px;" width="20" height="20"><use href="#i_va" width="20" height="20"/></svg>
<div class="a" style="left:592.5px;top:262.5px;width:264px;height:335px;overflow:hidden;background:#fff">
<div class="a" style="left:2.5px;top:1.5px;width:259px;height:36.5px;background:#eeeeee"></div>
<div class="t b" style="letter-spacing:0.043px;left:6px;top:6.7px;font-size:11px;height:11px">Add logo</div>
<div class="t" style="letter-spacing:-0.096px;left:6px;top:22.7px;font-size:11px;height:11px;color:#111">Put a logo on top of video, with alpha blending.</div>
<div class="t b" style="letter-spacing:-0.015px;left:6px;top:46.5px;font-size:11px;height:11px">Aggiungi bordi</div>
<div class="t" style="letter-spacing:-0.125px;left:6px;top:62.5px;font-size:11px;height:11px;color:#111">Add black borders around the image.</div>
<div class="t b" style="letter-spacing:0.153px;left:6px;top:86.6px;font-size:11px;height:11px">Annerimento bordi</div>
<div class="t" style="letter-spacing:-0.142px;left:6px;top:102.6px;font-size:11px;height:11px;color:#111">Remove noisy edge by turning them to black.</div>
<div class="t b" style="letter-spacing:-0.022px;left:6px;top:126.8px;font-size:11px;height:11px">Ascii View</div>
<div class="t" style="letter-spacing:-0.230px;left:6px;top:142.8px;font-size:11px;height:11px;color:#111">Ascii view</div>
<div class="t b" style="letter-spacing:-0.272px;left:6px;top:166.4px;font-size:11px;height:11px">Black</div>
<div class="t" style="letter-spacing:-0.219px;left:6px;top:182.4px;font-size:11px;height:11px;color:#111">Replace a section by black.</div>
<div class="t b" style="letter-spacing:-0.146px;left:6px;top:206.5px;font-size:11px;height:11px">Blend Frames</div>
<div class="t" style="letter-spacing:-0.114px;left:6px;top:222.5px;font-size:11px;height:11px;color:#111">Blend groups of N frames into a single frame.  Useful</div>
<div class="t" style="letter-spacing:-0.059px;left:6px;top:235.9px;font-size:11px;height:11px;color:#111">for speeding up slow motion footage or creating</div>
<div class="t" style="letter-spacing:-0.149px;left:6px;top:249.3px;font-size:11px;height:11px;color:#111">timelapses.</div>
<div class="t b" style="letter-spacing:-0.280px;left:6px;top:273.2px;font-size:11px;height:11px">Change FPS</div>
<div class="t" style="letter-spacing:-0.049px;left:6px;top:289.2px;font-size:11px;height:11px;color:#111">Speed up/slow down the video as if altering fps.</div>
<div class="t" style="letter-spacing:-0.074px;left:6px;top:302.6px;font-size:11px;height:11px;color:#111">This filter changes duration.</div>
<div class="t b" style="letter-spacing:-0.168px;left:6px;top:326.3px;font-size:11px;height:11px">Crop</div>
</div>
<div class="a" style="left:857px;top:262.5px;width:17px;height:335.0px;background:#f0f0f0"></div>
<div class="a" style="left:857px;top:280px;width:16px;height:147px;background:#cdcdcd"></div>
<svg class="a" style="left:857px;top:262.5px" width="17" height="17" viewBox="0 0 17 17"><path d="M4.2 10.5L8.3 6.3l4.1 4.2" fill="none" stroke="#505050" stroke-width="1.5"/></svg>
<svg class="a" style="left:857px;top:580.5px" width="17" height="17" viewBox="0 0 17 17"><path d="M4.2 6.3L8.3 10.5l4.1-4.2" fill="none" stroke="#505050" stroke-width="1.5"/></svg>
<div class="t" style="letter-spacing:-0.130px;left:427.4px;top:624.8px;font-size:11px;height:11px;color:#111;">Press Ctrl+Invio to accept the dialog</div>
<div class="btn" style="left:1014px;top:618px;width:76px;height:22.5px;"><span></span></div>
<svg class="a" style="left:1018px;top:622px;" width="15" height="15"><use href="#i_prev" width="15" height="15"/></svg>
<div class="t" style="letter-spacing:-0.171px;left:1036px;top:624.5px;font-size:11px;height:11px;">Anteprima</div>
<div class="a" style="left:1097px;top:618px;width:75px;height:22.5px;background:#e1e1e1;border:2px solid #1872cc"></div>
<svg class="a" style="left:1112px;top:622px;" width="13" height="13"><use href="#i_close" width="13" height="13"/></svg>
<div class="t" style="letter-spacing:-0.365px;left:1129px;top:624.5px;font-size:11px;height:11px;">Chiudi</div>
</div></div>
<div class="a" style="left:9px;top:761.5px;width:366px;height:25.0px;background:#f4f4f4;border:1px solid #5a55c4"></div>
<div class="a" style="left:11px;top:772px;width:1330px;height:3px;background:#e4e4e4;border-top:1px solid #d4d4d4;border-bottom:1px solid #d9d9d9"></div>
<svg class="a" style="left:0;top:761px" width="1345" height="26"><path d="M12 2.500H1337.500M12 23H1337.500" stroke="#bcbcbc" stroke-width="4" stroke-dasharray="1 12.236" fill="none"/></svg>
<div class="a" style="left:9px;top:761.5px;width:1px;height:25.0px;background:#5a55c4"></div>
<div class="a" style="left:374px;top:761.5px;width:1px;height:25.0px;background:#5a55c4"></div>
<div class="a" style="left:537.5px;top:766px;width:10.0px;height:14.5px;background:#0a78d6"></div>
<svg class="a" style="left:11px;top:793.5px;" width="18" height="18"><use href="#b_play" width="18" height="18"/></svg>
<svg class="a" style="left:37px;top:793.5px;" width="18" height="18"><use href="#b_back" width="18" height="18"/></svg>
<svg class="a" style="left:62.7px;top:793.5px;" width="18" height="18"><use href="#b_fwd" width="18" height="18"/></svg>
<svg class="a" style="left:88.5px;top:793.5px;" width="18" height="18"><use href="#b_rew" width="18" height="18"/></svg>
<svg class="a" style="left:114.3px;top:793.5px;" width="18" height="18"><use href="#b_ff" width="18" height="18"/></svg>
<svg class="a" style="left:191.7px;top:793.5px;" width="18" height="18"><use href="#b_pk" width="18" height="18"/></svg>
<svg class="a" style="left:217.6px;top:793.5px;" width="18" height="18"><use href="#b_nk" width="18" height="18"/></svg>
<svg class="a" style="left:243.3px;top:793.5px;" width="18" height="18"><use href="#b_pb" width="18" height="18"/></svg>
<svg class="a" style="left:269.2px;top:793.5px;" width="18" height="18"><use href="#b_nb" width="18" height="18"/></svg>
<svg class="a" style="left:295px;top:793.5px;" width="18" height="18"><use href="#b_p60" width="18" height="18"/></svg>
<svg class="a" style="left:321px;top:793.5px;" width="18" height="18"><use href="#b_n60" width="18" height="18"/></svg>
<div class="a" style="left:140.5px;top:794px;width:18.0px;height:17px;background:#e8e8e8;border:1px solid #222;border-right:none"></div>
<div class="a" style="left:144.5px;top:798.5px;width:14.0px;height:9.5px;background:#ff3a10"></div>
<div class="t" style="left:149px;top:798.4px;font-size:10px;height:10px;font-weight:bold;color:#4a0a00;">A</div>
<div class="a" style="left:166px;top:794px;width:18px;height:17px;background:#f2f2f2;border-top:1px solid #333;border-bottom:1px solid #444"></div>
<div class="a" style="left:166px;top:798.5px;width:4px;height:9.5px;background:#ff3a10"></div>
<div class="a" style="left:171.3px;top:794px;width:2.0px;height:17px;background:#8a8a8a"></div>
<div class="t" style="left:176.6px;top:798.0px;font-size:10.5px;height:10.5px;color:#333;">B</div>
<div class="btn" style="left:8px;top:826px;width:76px;height:21px;"><span>Tempo:</span></div>
<div class="a" style="left:90px;top:826px;width:73px;height:21px;background:#fff;border:1px solid #7a7a7a"></div>
<div class="t" style="letter-spacing:-0.070px;left:93.8px;top:831.7px;font-size:11px;height:11px;">00:00:31.716</div>
<div class="t" style="letter-spacing:0.097px;left:167.5px;top:831.7px;font-size:11px;height:11px;">/ 00:01:55.148</div>
<div class="t" style="letter-spacing:-0.054px;left:264px;top:831.7px;font-size:11px;height:11px;">Tipo di fotogramma:  I-FRM (00)</div>
<svg class="a" style="left:1356px;top:766px" width="133" height="14" viewBox="0 0 133 14"><rect x="0" y="0.500" width="133" height="13" rx="2" fill="url(#gjog)"/><rect x="0" y="0.500" width="133" height="13" rx="2" fill="url(#gjogv)"/><path d="M21.7 1v12M43.6 1v12M86.4 1v12M108.3 1v12" stroke="#666" stroke-opacity=".5" stroke-width="0.8"/><rect x="64" y="2" width="2" height="10" fill="#d0141a"/></svg>
<div class="t" style="letter-spacing:-0.203px;left:1356px;top:790.0px;font-size:11px;height:11px;">A:</div>
<div class="t" style="letter-spacing:-0.203px;left:1356px;top:816.0px;font-size:11px;height:11px;">B:</div>
<div class="btn" style="left:1375px;top:784px;width:113px;height:22px;border-color:#bcbcbc"><span>00:00:00.163</span></div>
<div class="btn" style="left:1375px;top:811px;width:113px;height:21px;border-color:#bcbcbc"><span>00:00:31.716</span></div>
<div class="t" style="letter-spacing:-0.056px;left:1356px;top:838.3px;font-size:11px;height:11px;">Selection: 00:00:31.553</div>
<div class="a" style="left:1507px;top:767px;width:16px;height:17px;background:#cce4f7;border:1px solid #2a7fd4"></div>
<svg class="a" style="left:1508px;top:768.5px" width="14" height="14" viewBox="0 0 16 16"><circle cx="8" cy="7.500" r="6.700" fill="#cfcfcf" stroke="#8a8a8a" stroke-width=".9"/><path d="M2 6a6.300 6.300 0 0 1 12 0a9 5 0 0 0-12 0z" fill="#f2f2f2"/><ellipse cx="8" cy="8.600" rx="3.900" ry="3.300" fill="#ececec" stroke="#9c9c9c" stroke-width=".8"/><ellipse cx="8" cy="9.200" rx="1.700" ry="1.300" fill="#b4b4b4"/><path d="M4.600 13.600q3.400 2.600 6.800 0z" fill="#a0a0a0"/></svg>
<div class="a" style="left:1513px;top:800px;width:3px;height:48px;background:#e4e4e4;border:1px solid #d6d6d6"></div>
<div class="a" style="left:1506px;top:790.5px;width:17px;height:10.0px;background:#0a78d6"></div>
<div class="a" style="left:1542px;top:771px;width:52px;height:73px;background:#000"></div>
</body></html>
